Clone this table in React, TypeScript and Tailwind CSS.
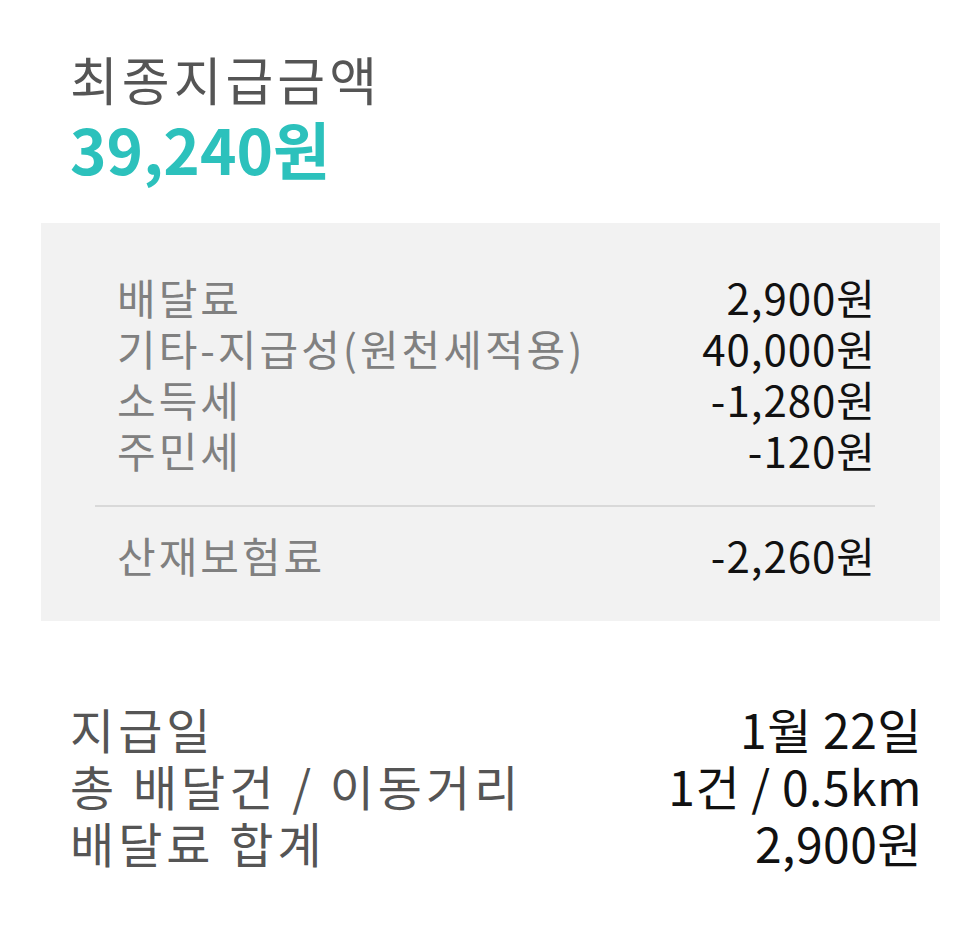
const font = "font-['Noto_Sans_CJK_KR','Noto_Sans',sans-serif]";

const details = [
  { label: "배달료", value: "2,900원" },
  { label: "기타-지급성(원천세적용)", value: "40,000원" },
  { label: "소득세", value: "-1,280원" },
  { label: "주민세", value: "-120원" },
];

const summary = [
  { label: "지급일", value: "1월 22일" },
  { label: "총 배달건 / 이동거리", value: "1건 / 0.5km" },
  { label: "배달료 합계", value: "2,900원" },
];

export default function App() {
  return (
    <div className={`${font} min-h-[941px] w-[972px] bg-white`}>
      {/* header */}
      <div className="px-[70px] pt-[49px]">
        <p className="text-[52px] leading-[60px] tracking-[4px] text-[#555]">최종지급금액</p>
        <p className="mt-[4px] text-[62px] font-bold leading-[70px] text-[#2cc1bc]">39,240원</p>
      </div>

      {/* breakdown */}
      <div className="mx-[41px] mt-[40px] w-[899px] bg-[#f2f2f2] pb-[41px] pl-[54px] pr-[65px] pt-[48px]">
        <div className="pl-[22px] pr-0">
          {details.map((row) => (
            <div key={row.label} className="flex items-center justify-between text-[42px] leading-[51px]">
              <span className="tracking-[3px] text-[#808080]">{row.label}</span>
              <span className="-mr-[1px] tracking-[1px] text-[#111]">{row.value}</span>
            </div>
          ))}
        </div>
        <div className="mb-[22px] mt-[30px] h-[2px] bg-[#d9d9d9]" />
        <div className="flex items-center justify-between pl-[22px] pr-0 text-[42px] leading-[51px]">
          <span className="tracking-[3px] text-[#808080]">산재보험료</span>
          <span className="-mr-[1px] tracking-[1px] text-[#111]">-2,260원</span>
        </div>
      </div>

      {/* summary */}
      <div className="pl-[70px] pr-[50px] pt-[79px]">
        {summary.map((row) => (
          <div key={row.label} className="flex items-center justify-between text-[48px] leading-[57px]">
            <span className="tracking-[4px] text-[#555]">{row.label}</span>
            <span className="tracking-[0.5px] text-[#111]">{row.value}</span>
          </div>
        ))}
      </div>
    </div>
  );
}
